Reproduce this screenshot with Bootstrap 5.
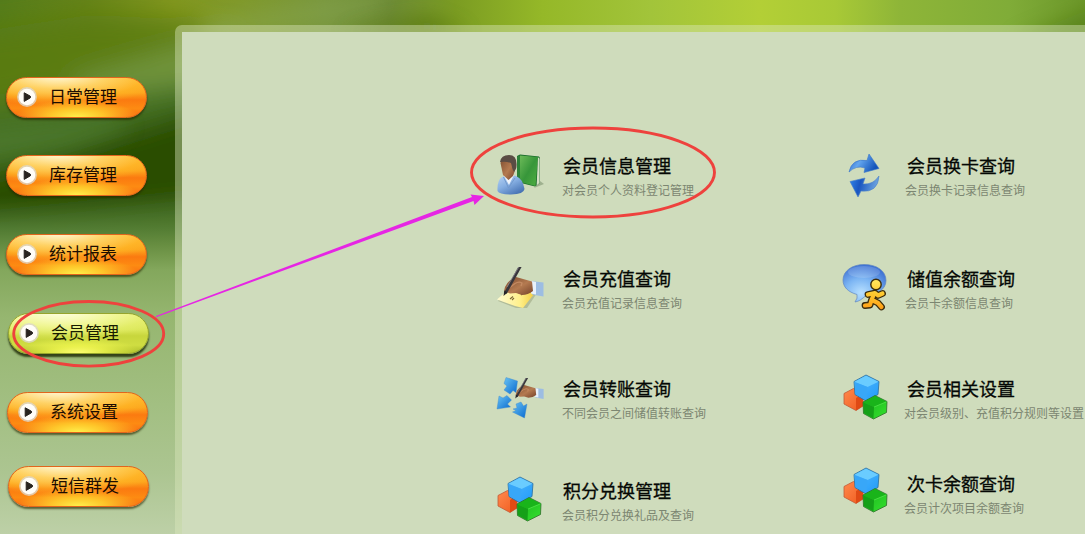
<!DOCTYPE html>
<html lang="zh-CN">
<head>
<meta charset="utf-8">
<meta name="viewport" content="width=device-width, initial-scale=1">
<title>会员管理</title>
<link href="https://cdn.jsdelivr.net/npm/bootstrap@5.3.0/dist/css/bootstrap.min.css" rel="stylesheet">
<style>
  body { font-family: "Liberation Sans", "Noto Sans CJK SC", sans-serif; background: #b9cda0; }
  .shell { width: 1085px; height: 534px; }
  .backdrop { z-index: 0; }
  .side { width: 175px; padding: 77px 0 0 6px; z-index: 1; }
  .pill {
    width: 141px; height: 41px; padding: 0 0 1px 10px; border: 1px solid #e2651c; border-radius: 21px;
    font-size: 17px; line-height: 37px; color: #1c0c00;
    background:
      radial-gradient(ellipse 62px 17px at 50% 100%, #fff04a 0, rgba(255,222,50,.75) 45%, rgba(255,190,30,0) 100%),
      radial-gradient(ellipse 110px 31px at 36% -8%, rgba(255,255,235,.95) 0, rgba(255,222,120,.75) 45%, rgba(255,187,40,.5) 80%, rgba(255,170,30,0) 100%),
      linear-gradient(#ffb832 0, #fda51d 38%, #fb7a10 56%, #fd8b12 78%, #f96f12 100%);
    box-shadow: 0 2px 2px rgba(40,40,0,.65);
  }
  .pill:hover { color: #1c0c00; }
  .pill.chosen {
    border-color: #96a52c; color: #171b00;
    background:
      radial-gradient(ellipse 62px 16px at 50% 100%, #ffff70 0, rgba(245,250,80,.7) 45%, rgba(230,240,70,0) 100%),
      radial-gradient(ellipse 110px 29px at 36% -8%, #ffffe8 0, rgba(245,250,165,.8) 50%, rgba(230,240,110,.5) 82%, rgba(220,230,90,0) 100%),
      linear-gradient(#e8ef77 0, #dbe75a 40%, #c8d63c 56%, #cfdd42 80%, #aabc2a 100%);
    box-shadow: 0 3px 2px rgba(25,35,0,.8);
  }
  .pill svg { width: 20px; height: 20px; margin-right: 12px; }
  .frame {
    flex: 1; margin-top: 25px; border: solid rgba(220,232,190,.43); border-width: 7px 0 0 7px;
    border-top-left-radius: 7px; background: #cfdcbc; background-clip: padding-box;
    padding: 122px 0 0 314px; z-index: 1;
  }
  .colA { width: 346px; }
  .entry { height: 48px; white-space: nowrap; }
  .entry > svg { width: 48px; height: 48px; flex: none; overflow: visible; }
  .entry > div { padding-top: 1px; }
  .colA .entry > svg { margin-right: 18px; }
  .colB .entry > svg { margin-right: 15px; }
  .entry h2 { font-size: 18px; line-height: 24px; margin: 0; color: #050805; font-weight: 400; -webkit-text-stroke: .3px #050805; }
  .colA h2 { padding-left: 1px; }
  .entry p { font-size: 12px; line-height: 24px; margin: 0; color: #7c8671; }
  .nudge2 { padding-left: 2px; } .nudge3 { padding-left: 3px; }
  .pull { margin-left: -1px; }
  .marks { z-index: 3; pointer-events: none; }
</style>
</head>
<body>
<div class="shell position-relative overflow-hidden d-flex">
  <svg class="backdrop position-absolute top-0 start-0" width="1085" height="534" aria-hidden="true">
    <defs>
      <linearGradient id="sky" x1="0" x2="1085" y1="0" y2="0" gradientUnits="userSpaceOnUse">
        <stop offset="0" stop-color="#557c1a"/><stop offset=".08" stop-color="#658319"/><stop offset=".16" stop-color="#82971f"/>
        <stop offset=".22" stop-color="#80992a"/><stop offset=".3" stop-color="#78963c"/><stop offset=".36" stop-color="#6d8b35"/>
        <stop offset=".42" stop-color="#7b9c22"/><stop offset=".5" stop-color="#95b828"/><stop offset=".6" stop-color="#a2c43a"/>
        <stop offset=".7" stop-color="#b3cf36"/><stop offset=".77" stop-color="#a8c936"/><stop offset=".83" stop-color="#8eb538"/>
        <stop offset=".93" stop-color="#80ac38"/><stop offset="1" stop-color="#6c972a"/>
      </linearGradient>
      <linearGradient id="field" x1="0" x2="0" y1="195" y2="534" gradientUnits="userSpaceOnUse">
        <stop offset="0" stop-color="#426a28" stop-opacity="0"/><stop offset=".1" stop-color="#557f38" stop-opacity=".8"/><stop offset=".22" stop-color="#83a75c"/>
        <stop offset=".36" stop-color="#96b670"/><stop offset=".62" stop-color="#a2bf82"/><stop offset=".82" stop-color="#acc591"/><stop offset="1" stop-color="#bdd0a7"/>
      </linearGradient>
      <filter id="soft" x="-40%" y="-60%" width="180%" height="220%"><feGaussianBlur stdDeviation="13"/></filter>
      <filter id="softer" x="-60%" y="-120%" width="220%" height="340%"><feGaussianBlur stdDeviation="10"/></filter>
    </defs>
    <rect width="1085" height="534" fill="url(#sky)"/>
    <g filter="url(#soft)">
      <path d="M-40 35 90 15 190 20 230 62 -40 110Z" fill="#597b10" opacity=".85"/>
      <path d="M-40 112Q60 97 230 70V240H-40Z" fill="#446f20"/>
      <path d="M70 80Q130 62 235 30V76Q150 92 80 98Z" fill="#759a47" opacity=".8"/>
      <path d="M50 155 230 98V200L-40 228V178Z" fill="#2b4d04"/>
    </g>
    <path d="M-20 130 110 118 130 128 70 148 -20 158Z" fill="#4f7c32" opacity=".6" filter="url(#softer)"/>
    <path d="M200 22 390-6 370 12 220 36Z" fill="#8caa5b" opacity=".45" filter="url(#softer)"/>
    <path d="M340 32 430 18 470 34Z" fill="#4f7010" opacity=".75" filter="url(#softer)"/>
    <path d="M1010 42 1100 5V50Z" fill="#4c7510" opacity=".5" filter="url(#softer)"/>
    <rect y="195" width="190" height="339" fill="url(#field)"/>
  </svg>

  <svg width="0" height="0" class="position-absolute" aria-hidden="true">
    <defs>
      <linearGradient id="greenFace" x2="1" y2="1"><stop stop-color="#18b21c"/><stop offset="1" stop-color="#35e12e"/></linearGradient>
      <linearGradient id="orangeFace" x2="1" y2="1"><stop stop-color="#ff8a4e"/><stop offset="1" stop-color="#f05a1c"/></linearGradient>
      <linearGradient id="blueFace" x2="1" y2="1"><stop stop-color="#58baff"/><stop offset="1" stop-color="#209bf8"/></linearGradient>
      <linearGradient id="arrowUp" x2="1" y2=".4"><stop stop-color="#245dc0"/><stop offset=".45" stop-color="#63a6ee"/><stop offset="1" stop-color="#1354ba"/></linearGradient>
      <linearGradient id="arrowDown" x2="1" y2=".2"><stop stop-color="#2f86ec"/><stop offset=".4" stop-color="#1a56c0"/><stop offset="1" stop-color="#6fa6e0"/></linearGradient>
      <linearGradient id="bookFace" x2="1" y2="1"><stop stop-color="#6dbb59"/><stop offset=".5" stop-color="#37963a"/><stop offset="1" stop-color="#4eaf42"/></linearGradient>
      <linearGradient id="skin" x2="1" y2="1"><stop stop-color="#7a4a2e"/><stop offset=".55" stop-color="#b47a50"/><stop offset="1" stop-color="#74412a"/></linearGradient>
      <linearGradient id="shirt" x2=".7" y2="1"><stop stop-color="#b9d4f4"/><stop offset=".5" stop-color="#86afe2"/><stop offset="1" stop-color="#4773b4"/></linearGradient>
      <radialGradient id="bubble" cx=".42" cy=".75" r=".75"><stop stop-color="#b8e0ff"/><stop offset=".5" stop-color="#7cb5f3"/><stop offset="1" stop-color="#3c70d2"/></radialGradient>
      <linearGradient id="runner" x1="0" x2="0" y1="12" y2="43" gradientUnits="userSpaceOnUse"><stop stop-color="#ffe860"/><stop offset=".5" stop-color="#ffc82e"/><stop offset="1" stop-color="#ff9b14"/></linearGradient>
      <linearGradient id="tile" x2="1" y2="1"><stop stop-color="#69c3f4"/><stop offset="1" stop-color="#0869cf"/></linearGradient>
      <linearGradient id="paper" x2="1"><stop stop-color="#fffbd2"/><stop offset=".55" stop-color="#fff08c"/><stop offset="1" stop-color="#f0c42b"/></linearGradient>
      <symbol id="play" viewBox="0 0 20 20">
        <circle cx="10" cy="10" r="9.9" fill="#dcd7cc" opacity=".8"/><circle cx="10" cy="10" r="8.3" fill="#fffdf8"/>
        <path d="M7.2 5.8 13.2 9.1Q14.2 10 13.2 10.9L7.2 14.4Z" fill="#29241f" stroke="#29241f" stroke-linejoin="round"/>
      </symbol>
      <symbol id="cubes" viewBox="0 0 48 48">
        <g stroke-width=".8" stroke-linejoin="round">
          <path d="M2 19.5 11.5 14.5 21 19.5V32L14 36.5 2 30Z" fill="url(#orangeFace)" stroke="#c05a38"/>
          <path d="M14 24 21 20V32L14 36.5Z" fill="#df4a14"/>
          <path d="M12 7.5 24 1 37 7.5 36 20.5 24 27 13 20.5Z" fill="url(#blueFace)" stroke="#2a6c9c"/>
          <path d="M12.5 7.8 24 1.8 36.4 7.8 25.5 13Z" fill="#6accff"/><path d="M12.5 8 25.5 13 24.5 26.3 13.4 20.2Z" fill="#38a7f8"/>
          <path d="M21 28 33 21.5 45 27.5 44.5 38.5 31.5 45 21.5 39.5Z" fill="url(#greenFace)" stroke="#2d6d28"/>
          <path d="M21.5 28.2 32 33 44.5 27.7 33 22Z" fill="#19b41a"/><path d="M21.5 28.5 32 33 31.5 44.4 22 39Z" fill="#15a018"/>
          <path d="M32 33 44.5 27.8" fill="none" stroke="#5ae850" stroke-width=".7"/>
        </g>
      </symbol>
      <symbol id="penhand" viewBox="0 0 48 48">
        <path d="M35 14 47.5 15.5V29.5L36 27.5Z" fill="#9dbde2"/><path d="M35 14 40 15V27.5L35 26.5Z" fill="#e8f1fa"/>
        <path d="M9 20Q13 12 20 10L36 14.5 37 24Q32 28 26 28L20 26 14 26.5 8 24Z" fill="url(#skin)"/>
        <path d="M13 21 19 16.5Q23 14 26 16L25 19" fill="none" stroke="#c48a62" stroke-width="1.4"/>
        <path d="M9.5 26 25-2" stroke="#38363b" stroke-width="2.9"/><path d="M11 20 24-2" stroke="#8b8990" stroke-width=".8"/>
        <path d="M7.5 29 8.3 23.5 11.5 25.5Z" fill="#242329"/>
      </symbol>
    </defs>
  </svg>

  <nav class="side position-relative d-flex flex-column align-items-start flex-shrink-0">
    <a class="pill btn d-flex align-items-center" style="margin-bottom:37px"><svg><use href="#play"/></svg>日常管理</a>
    <a class="pill btn d-flex align-items-center" style="margin-bottom:38px"><svg><use href="#play"/></svg>库存管理</a>
    <a class="pill btn d-flex align-items-center" style="margin-bottom:38px"><svg><use href="#play"/></svg>统计报表</a>
    <a class="pill chosen btn d-flex align-items-center" style="margin-bottom:38px;margin-left:2px"><svg><use href="#play"/></svg>会员管理</a>
    <a class="pill btn d-flex align-items-center" style="margin-bottom:33px;margin-left:1px"><svg><use href="#play"/></svg>系统设置</a>
    <a class="pill btn d-flex align-items-center" style="margin-left:2px"><svg><use href="#play"/></svg>短信群发</a>
  </nav>

  <main class="frame position-relative d-flex align-items-start">
    <section class="colA flex-shrink-0">
      <div class="entry d-flex" style="margin-bottom:65px">
        <svg viewBox="0 0 48 48">
          <path d="M38 34 48 30 44 27Z" fill="#7e9472" opacity=".6"/>
          <path d="M21 2 24 .5 43 2.5 44 4V29L39 32.5 21 28Z" fill="#196b2b"/>
          <path d="M24 1.5 42 3 39.5 32 24 28Z" fill="url(#bookFace)"/><path d="M42 3.2 43.6 4.5V29L40.6 31.5Z" fill="#d5e0c4"/>
          <path d="M21 2.5 24 1.5V28.5L21 27.5Z" fill="#2c8238"/>
          <path d="M1.5 37Q1 26 6 23L12 21 20 22Q27 25 28.5 35Q28 40 15 40.5 3 40.5 1.5 37Z" fill="url(#shirt)"/>
          <path d="M8 22 18 21 13 31Z" fill="#eef3fa"/><path d="M7.5 23 12.5 34 19 24" fill="none" stroke="#7299cc"/>
          <path d="M4.5 9Q5 2 13 2 21 3 19.5 15L17 22 12.5 26 7 21Z" fill="url(#skin)"/>
          <path d="M4 8Q5 1 13 1 22 1 20.3 14L18 18 16.5 15 15 9Q10 7 4 8Z" fill="#5a4c44"/>
        </svg>
        <div><h2>会员信息管理</h2><p>对会员个人资料登记管理</p></div>
      </div>
      <div class="entry d-flex" style="margin-bottom:62px">
        <svg viewBox="0 0 48 48">
          <path d="M2 34 12 23 43 23 31 41 20 41Z" fill="#77805a" opacity=".35"/><path d="M1 32.5 13 22 42 22 27 41 19 39Z" fill="url(#paper)"/>
          <path d="M14 32l3-2.5m-1 3.5 2-2m4-5 3-2m0 4 2-2" stroke="#7d6935" stroke-width="1.1"/>
          <use href="#penhand" width="48" height="48"/>
        </svg>
        <div><h2>会员充值查询</h2><p>会员充值记录信息查询</p></div>
      </div>
      <div class="entry d-flex" style="margin-bottom:54px">
        <svg viewBox="0 0 48 48">
          <g fill="url(#tile)" stroke="#3f88c9" stroke-width=".4">
            <path d="M10 .5 21.5 4 20 15.5 17 13.5 14 17 8 13 11 9 8 6.5Z"/>
            <path d="M3 19 7 21 11 18.5 15.5 23 11.5 27 14.5 30 1 32Z"/>
            <path d="M17 32 21 31 20 27 25 25 27.5 29 31 27 28.5 41 16.5 35 20 33.5Z"/>
          </g>
          <use href="#penhand" x="14" y="1" width="34" height="34"/>
        </svg>
        <div><h2>会员转账查询</h2><p>不同会员之间储值转账查询</p></div>
      </div>
      <div class="entry d-flex">
        <svg viewBox="0 0 48 48"><use href="#cubes" y="-3" width="48" height="48"/></svg>
        <div><h2>积分兑换管理</h2><p>会员积分兑换礼品及查询</p></div>
      </div>
    </section>

    <section class="colB flex-shrink-0">
      <div class="entry d-flex" style="margin-bottom:65px">
        <svg viewBox="0 0 48 48">
          <path d="M7 18Q10 4 25 6.5L27 0 37 14.5 22 18.5 23 14Q14 11 7 18Z" fill="url(#arrowUp)" stroke="#3b76c8" stroke-width=".6"/>
          <path d="M37 22Q36 39 19 37L16 43 8 27.5 23 24 21 30Q31 31 37 22Z" fill="url(#arrowDown)" stroke="#4a7fc8" stroke-width=".6"/>
        </svg>
        <div><h2 class="nudge2">会员换卡查询</h2><p class="ps-0">会员换卡记录信息查询</p></div>
      </div>
      <div class="entry d-flex" style="margin-bottom:62px">
        <svg viewBox="0 0 48 48">
          <path d="M22-2.5C35-2.5 44 4 44 13.5S34 28 24 28.5C20 32 17 34.5 13 35Q16 31 15 27.5C6 25 1 20 1 13 1 4 10-2.5 22-2.5Z" fill="url(#bubble)" stroke="#6187c0" stroke-width=".7"/>
          <ellipse cx="22" cy="5" rx="16" ry="6" fill="#fff" opacity=".15"/>
          <g fill="none" stroke-linecap="round" stroke-linejoin="round">
            <path d="M26 27.5 33 26 36 28.5 40.5 26.5M32 27 29.5 33M29.5 33 28 38 23 38.5M30 33 36 36 39.5 40" stroke="#3b2c0c" stroke-width="6.8"/>
            <path d="M26 27.5 33 26 36 28.5 40.5 26.5M32 27 29.5 33M29.5 33 28 38 23 38.5M30 33 36 36 39.5 40" stroke="url(#runner)" stroke-width="4.2"/>
          </g>
          <circle cx="34" cy="17.5" r="5.2" fill="url(#runner)" stroke="#3b2c0c" stroke-width="1.4"/>
        </svg>
        <div><h2 class="nudge2">储值余额查询</h2><p>会员卡余额信息查询</p></div>
      </div>
      <div class="entry d-flex" style="margin-bottom:47px">
        <svg viewBox="0 0 48 48"><use href="#cubes" y="-3" width="48" height="48"/></svg>
        <div class="pull"><h2 class="nudge3">会员相关设置</h2><p>对会员级别、充值积分规则等设置</p></div>
      </div>
      <div class="entry d-flex">
        <svg viewBox="0 0 48 48"><use href="#cubes" y="-5" width="48" height="48"/></svg>
        <div class="pull"><h2 class="nudge3">次卡余额查询</h2><p>会员计次项目余额查询</p></div>
      </div>
    </section>
  </main>

  <svg class="marks position-absolute top-0 start-0" width="1085" height="534" aria-hidden="true">
    <g fill="none" stroke="#ee423d" stroke-width="2.9">
      <ellipse cx="593" cy="172.5" rx="121.5" ry="44.5"/><ellipse cx="88.7" cy="333.8" rx="75" ry="32.3"/>
    </g>
    <path d="M156 316 472 197 470.5 194.5 484 196 474.5 205 473.5 201 156 317.2Z" fill="#e626e4"/>
  </svg>
</div>
<script src="https://cdn.jsdelivr.net/npm/bootstrap@5.3.0/dist/js/bootstrap.bundle.min.js"></script>
</body>
</html>
